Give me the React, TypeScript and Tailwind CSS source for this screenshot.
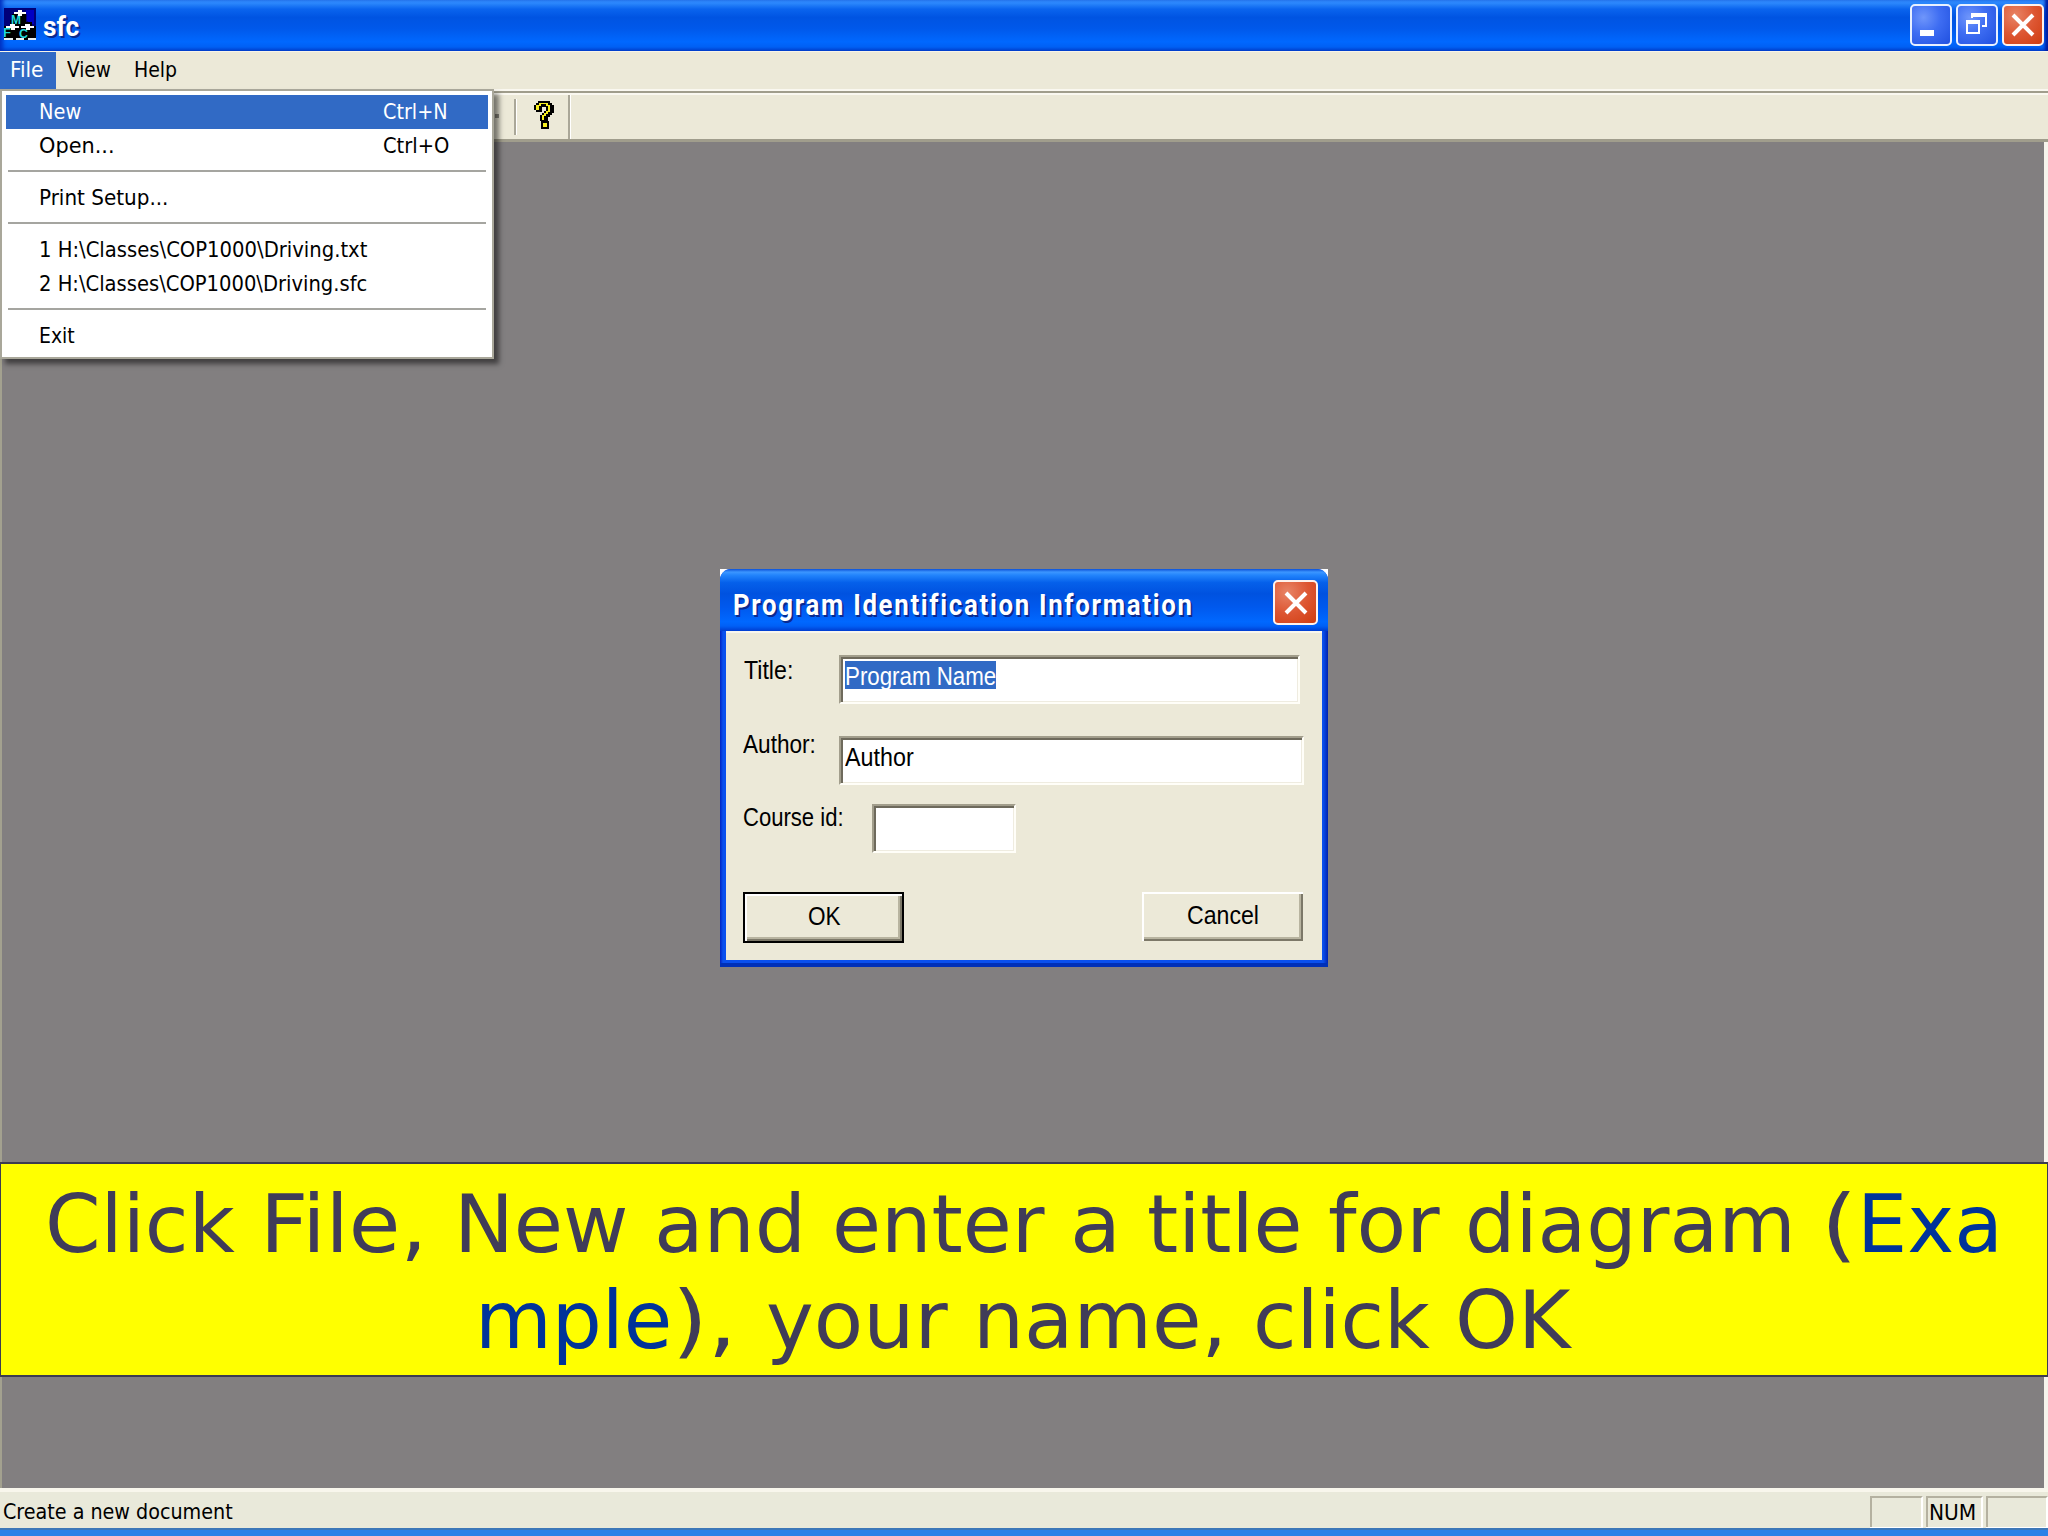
import { useLayoutEffect, useRef, useState } from "react";
import type { ReactNode } from "react";

const TAHOMA = "font-['DejaVu_Sans_Condensed','DejaVu_Sans',sans-serif] text-[21px]";
const SANS = "font-['Liberation_Sans',Arial,sans-serif] text-[26px]";

/** A single line of text squeezed or stretched horizontally to an exact width. */
function Fit({ w, className = "", children }: { w: number; className?: string; children: ReactNode }) {
  const ref = useRef<HTMLSpanElement>(null);
  const [scale, setScale] = useState(1);
  useLayoutEffect(() => {
    if (ref.current) setScale(w / ref.current.offsetWidth);
  }, [w]);
  return (
    <span className="block shrink-0" style={{ width: w }}>
      <span
        ref={ref}
        className={`inline-block origin-left whitespace-pre align-top ${className}`}
        style={{ transform: `scaleX(${scale})` }}
      >
        {children}
      </span>
    </span>
  );
}

function AppIcon() {
  return (
    <svg viewBox="0 0 32 32" className="h-8 w-8" shapeRendering="crispEdges">
      <rect width="32" height="32" fill="#000078" />
      <path d="M22 2h8v14h-6z" fill="#0000c4" />
      <path d="M10 4h12v10h6v4h4v14H0V18h6v-6h2V6h2z" fill="#000" />
      <g fill="#22d8dc" fontFamily="Liberation Sans" fontWeight="bold" fontSize="13">
        <text x="7" y="16" textLength="10" lengthAdjust="spacingAndGlyphs">M</text>
        <text x="-1" y="29" textLength="8" lengthAdjust="spacingAndGlyphs">F</text>
        <text x="15" y="30" textLength="9" lengthAdjust="spacingAndGlyphs">C</text>
      </g>
      <path d="M10 4h4v-2h4v2h4v2h-4v2h-4v-2h-4zM2 18h4v-2h5v2h4v2h-4v2h-4v-2h-5zM17 18h4v-2h5v2h4v2h-4v2h-4v-2h-5z" fill="#fff" />
      <path d="M0 30h9v2H0zM12 30h8v2h-8zM24 30h8v2h-8z" fill="#e8f0f0" />
    </svg>
  );
}

function HelpIcon() {
  return (
    <svg viewBox="0 0 20 28" className="h-7 w-5" shapeRendering="crispEdges">
      <path d="M4 0h12v2h2v2h2v8h-2v2h-2v2h-2v4h1v8H7v-8h-1v-6h2v-2h2v-2h2V6H8v5H2V9H0V4h2V2h2z" fill="#000" />
      <path d="M5 2h9v2h2v7h-2v2h-2v2h-2v4H8v-5h2v-2h2v-2h2V5h-2V3H7v2H5v4H2V4h3zM9 22h4v4H9z" fill="#f8f020" />
    </svg>
  );
}

const capBlue =
  "rounded-[5px] border-2 border-[#e8f0ff] bg-[radial-gradient(circle_at_30%_30%,#6f96fb_0%,#3e6df2_45%,#2050e0_100%)]";
const capRed =
  "rounded-[5px] border-2 border-[#fff2ec] bg-[radial-gradient(circle_at_30%_25%,#e88466_0%,#dd5632_50%,#cf3c10_100%)]";

function Cross() {
  return (
    <svg viewBox="0 0 24 24" className="h-6 w-6">
      <path d="M2 2L22 22M22 2L2 22" stroke="#fff" strokeWidth="4" />
    </svg>
  );
}

function MenuRow({ label, w, keys, kw = 0, active = false }: { label: string; w: number; keys?: string; kw?: number; active?: boolean }) {
  return (
    <div className={`flex h-[34px] pl-[33px] leading-[35px] ${active ? "bg-[#316ac5] text-white" : "text-black"}`}>
      <div className="w-[344px]">
        <Fit w={w}>{label}</Fit>
      </div>
      {keys && <Fit w={kw}>{keys}</Fit>}
    </div>
  );
}

function MenuRule() {
  return <div className="mx-0.5 mt-[7px] mb-[9px] h-0.5 bg-[#a5a5a0]" />;
}

function FileMenu() {
  return (
    <div className="absolute top-[89px] left-0 z-20 h-[270px] w-[494px] border-2 border-[#a9a79a] bg-white p-1 shadow-[5px_5px_5px_rgba(0,0,0,0.5)]">
      <MenuRow label="New" w={42} keys="Ctrl+N" kw={65} active />
      <MenuRow label="Open..." w={75} keys="Ctrl+O" kw={66} />
      <MenuRule />
      <MenuRow label="Print Setup..." w={129} />
      <MenuRule />
      <MenuRow label="1 H:\Classes\COP1000\Driving.txt" w={328} />
      <MenuRow label="2 H:\Classes\COP1000\Driving.sfc" w={328} />
      <MenuRule />
      <MenuRow label="Exit" w={36} />
    </div>
  );
}

const field =
  "box-border bg-white border-t-[2px] border-l-[2px] border-b-2 border-r-2 border-t-[#a29e8c] border-l-[#a29e8c] border-b-[#fffef8] border-r-[#fffef8] shadow-[inset_2px_2px_0_#6e6a5c,inset_-1px_-1px_0_#efece0]";

function Dialog() {
  return (
    <div className="absolute top-[569px] left-[720px] z-10 h-[398px] w-[608px] bg-white text-black">
      <div className="flex h-full flex-col overflow-hidden rounded-t-[11px] bg-[linear-gradient(90deg,#0023c0_0,#0a50ee_3px,#0a50ee_5px,#0a50ee_603px,#0023b0_608px)] pb-[7px] shadow-[inset_0_-4px_0_#0030b8]">
        <div className="flex h-[62px] items-start justify-between bg-[linear-gradient(180deg,#0a50d8_0%,#3c96ff_5%,#2284fc_10%,#0560ea_22%,#0052e0_40%,#0059ee_62%,#0068ff_85%,#0060f6_92%,#003dd0_100%)] pt-[11px] pr-[10px] pl-[13px]">
          <Fit
            w={461}
            className="font-['Roboto',sans-serif] text-[30px] leading-[49px] font-bold tracking-[2px] text-white [text-shadow:2px_2px_0_#0a2a90]"
          >
            Program Identification Information
          </Fit>
          <div className={`flex h-[45px] w-[45px] items-center justify-center ${capRed}`}>
            <Cross />
          </div>
        </div>
        <div className={`mx-1.5 flex-1 border-t-2 border-[#f8f6ee] bg-[#ece9d8] ${SANS}`}>
          <div className="flex h-[80px] pt-[22px] pl-[18px]">
            <div className="w-[95px] leading-[30px]">
              <Fit w={49}>Title:</Fit>
            </div>
            <div className={`h-[49px] w-[461px] pt-1 pl-1 ${field}`}>
              <div className="h-7 w-[151px] bg-[#316ac5] leading-[30px] text-white">
                <Fit w={151}>Program Name</Fit>
              </div>
            </div>
          </div>
          <div className="flex h-[68px] pt-[23px] pl-[17px]">
            <div className="-mt-[7px] w-[96px] leading-[30px]">
              <Fit w={73}>Author:</Fit>
            </div>
            <div className={`h-[49px] w-[465px] pt-[4px] pl-1 leading-[30px] ${field}`}>
              <Fit w={69}>Author</Fit>
            </div>
          </div>
          <div className="flex h-[111px] pt-[23px] pl-[17px]">
            <div className="-mt-[2px] w-[129px] leading-[30px]">
              <Fit w={101}>Course id:</Fit>
            </div>
            <div className={`h-[49px] w-[144px] ${field}`} />
          </div>
          <div className="flex justify-between pr-[19px] pl-[17px]">
            <div className="flex h-[51px] w-[161px] justify-center border-2 border-black bg-[#ece9d8] pt-[7px] pl-0.5 leading-[30px] shadow-[inset_2px_2px_0_#fff,inset_-2px_-2px_0_#7c7868,inset_-4px_-4px_0_#b8b4a0]">
              <Fit w={33}>OK</Fit>
            </div>
            <div className="flex h-[49px] w-[161px] justify-center bg-[#ece9d8] pt-[8px] leading-[30px] shadow-[inset_2px_2px_0_#fff,inset_-2px_-2px_0_#7c7868,inset_-4px_-4px_0_#b8b4a0]">
              <Fit w={72}>Cancel</Fit>
            </div>
          </div>
        </div>
      </div>
    </div>
  );
}

function Banner() {
  return (
    <div className="absolute top-[1162px] left-0 z-10 h-[215px] w-[2048px] border-x border-y-2 border-[#3c3c50] bg-[#ffff00] pt-[13px] font-['DejaVu_Sans',Verdana,sans-serif] text-[80px] leading-[96px] text-[#403c58]">
      <div className="flex pl-[44px]">
        <Fit w={215}>{"Click "}</Fit>
        <Fit w={194}>{"File, "}</Fit>
        <Fit w={200}>{"New "}</Fit>
        <Fit w={178}>{"and "}</Fit>
        <Fit w={238}>{"enter "}</Fit>
        <Fit w={77}>{"a "}</Fit>
        <Fit w={181}>{"title "}</Fit>
        <Fit w={137}>{"for "}</Fit>
        <Fit w={356}>{"diagram "}</Fit>
        <Fit w={36}>(</Fit>
        <Fit w={146} className="text-[#003399]">Exa</Fit>
      </div>
      <div className="flex pl-[474px]">
        <Fit w={197} className="text-[#003399]">mple</Fit>
        <Fit w={94}>{"), "}</Fit>
        <Fit w={207}>{"your "}</Fit>
        <Fit w={280}>{"name, "}</Fit>
        <Fit w={202}>{"click "}</Fit>
        <Fit w={115}>OK</Fit>
      </div>
    </div>
  );
}

const pane =
  "h-[31px] border-t-2 border-l-2 border-r-2 border-t-[#b4b1a0] border-l-[#b4b1a0] border-r-white shadow-[0_2px_0_#fff]";

export default function App() {
  return (
    <div className={`relative flex h-[1536px] w-[2048px] flex-col overflow-hidden bg-[#ece9d8] text-black ${TAHOMA}`}>
      <header className="flex h-[51px] shrink-0 bg-[linear-gradient(180deg,#2f86f8_0%,#2c88fc_6%,#0a64ee_18%,#0054e2_34%,#0058ea_55%,#0068ff_82%,#0060f4_92%,#0040cc_100%)] pt-1 pr-1 pl-1 shadow-[inset_5px_0_4px_-2px_#0030c0,inset_-5px_0_3px_-2px_#001ca0]">
        <div className="pt-1">
          <AppIcon />
        </div>
        <div className="flex-1 pl-[7px]">
          <Fit w={36} className="font-['Roboto',sans-serif] text-[27px] leading-[46px] font-bold text-white [text-shadow:2px_2px_0_#0a2a90]">
            sfc
          </Fit>
        </div>
        <div className="flex gap-1">
          <div className={`h-[42px] w-[42px] pt-[24px] pl-2 ${capBlue}`}>
            <div className="h-[6px] w-[14px] bg-white" />
          </div>
          <div className={`flex h-[42px] w-[42px] items-center justify-center ${capBlue}`}>
            <svg viewBox="0 0 22 22" className="mr-[3px] mb-0.5 h-[22px] w-[22px]" shapeRendering="crispEdges">
              <path d="M7 5V1h14v12h-4M7 3h14" fill="none" stroke="#fff" strokeWidth="2" />
              <path d="M2 8h12v12H2zM2 10h12" fill="none" stroke="#fff" strokeWidth="2" />
            </svg>
          </div>
          <div className={`flex h-[42px] w-[42px] items-center justify-center ${capRed}`}>
            <Cross />
          </div>
        </div>
      </header>

      <nav className="flex h-[38px] shrink-0 border-t border-[#f8f4e8] leading-[37px]">
        <div className="h-full w-14 bg-[#316ac5] pl-[10px] text-white">
          <Fit w={33}>File</Fit>
        </div>
        <div className="w-[78px] pl-[11px]">
          <Fit w={44}>View</Fit>
        </div>
        <Fit w={43}>Help</Fit>
      </nav>

      <div className="flex h-[53px] shrink-0 flex-col border-t-2 border-b-[3px] border-t-[#faf8f0] border-b-[#a09d8c]">
        <div className="h-[2px] bg-[#a09d8c]" />
        <div className="flex flex-1 border-t-2 border-[#faf8f0] pl-[495px]">
          <div className="mt-[19px] h-1 w-[4px] bg-[#8e8b80]" />
          <div className="mt-1 ml-[15px] h-9 w-[3px] border-r border-l-2 border-l-[#aaa798] border-r-white" />
          <div className="ml-[17px] pt-[6px]">
            <HelpIcon />
          </div>
          <div className="ml-[14px] w-[3px] border-r border-l-2 border-l-[#aaa798] border-r-white" />
        </div>
      </div>

      <main className="flex-1 border-r-4 border-l-2 border-l-[#a3a18f] border-r-[#f6f4ec] bg-[#827f80]" />

      <footer className="flex h-10 shrink-0 border-t-4 border-[#f8f6ec] bg-[#e9e9da] pl-[3px] leading-[41px]">
        <div className="w-[1867px]">
          <Fit w={230}>Create a new document</Fit>
        </div>
        <div className="flex gap-[3px] pt-1">
          <div className={`w-[53px] ${pane}`} />
          <div className={`w-[57px] pl-px leading-[30px] ${pane}`}>
            <Fit w={47}>NUM</Fit>
          </div>
          <div className={`w-[62px] ${pane}`} />
        </div>
      </footer>
      <div className="h-2 shrink-0 border-t-2 border-[#3d78b8] bg-[#2b82e8]" />

      <FileMenu />
      <Dialog />
      <Banner />
    </div>
  );
}
